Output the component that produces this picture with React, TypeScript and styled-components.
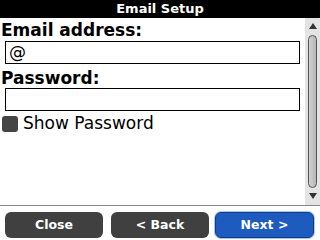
import React from 'react'
import styled, { createGlobalStyle } from 'styled-components'

const GlobalStyle = createGlobalStyle`
  html, body {
    margin: 0;
    padding: 0;
    background: #ffffff;
  }
  body {
    font-family: "DejaVu Sans", "Liberation Sans", sans-serif;
  }
`

const Screen = styled.div`
  width: 320px;
  height: 240px;
  display: flex;
  flex-direction: column;
  background: #ffffff;
  overflow: hidden;
`

const TitleBar = styled.div`
  height: 18px;
  flex: none;
  background: #000000;
  color: #ffffff;
  font-weight: bold;
  font-size: 13px;
  line-height: 18px;
  text-align: center;
`

const Body = styled.div`
  height: 187px;
  flex: none;
  display: flex;
`

const Content = styled.div`
  flex: 1;
  display: flex;
  flex-direction: column;
  padding: 3px 5px 0 1px;
`

const Label = styled.div<{ $gap: number }>`
  margin-top: ${(p) => p.$gap}px;
  font-weight: bold;
  font-size: 17px;
  line-height: 18px;
  color: #000000;
`

const Field = styled.div<{ $gap: number }>`
  height: 21px;
  margin: ${(p) => p.$gap}px 0 0 4px;
  border: 1px solid #000000;
  font-size: 17px;
  line-height: 21px;
  padding-left: 3px;
  color: #000000;
`

const CheckRow = styled.div`
  display: flex;
  align-items: center;
  gap: 5px;
  margin: 4px 0 0 1px;
  font-size: 17px;
  line-height: 17px;
  color: #000000;
`

const Box = styled.div`
  width: 16px;
  height: 16px;
  border-radius: 3px;
  background: #444444;
`

const ScrollBar = styled.div`
  width: 15px;
  background: #e4e4e4;
  display: flex;
  flex-direction: column;
  align-items: center;
  padding-top: 5px;
`

const Arrow = styled.div<{ $down?: boolean }>`
  width: 0;
  height: 0;
  border-left: 4px solid transparent;
  border-right: 4px solid transparent;
  ${(p) =>
    p.$down
      ? 'border-top: 6px solid #333333;'
      : 'border-bottom: 6px solid #333333;'}
`

const Thumb = styled.div`
  width: 7px;
  height: 151px;
  margin: 6px 0 5px;
  border: 1px solid #555555;
  border-radius: 5px;
  background: linear-gradient(to right, #d2d2d2, #b6b6b6);
`

const Footer = styled.div`
  flex: none;
  border-top: 1px solid #8a8a8a;
  height: 33px;
  display: flex;
  align-items: flex-start;
  gap: 8px;
  padding: 6px 5px 0;
`

const Button = styled.div<{ $primary?: boolean }>`
  width: ${(p) => (p.$primary ? 97 : 98)}px;
  height: ${(p) => (p.$primary ? 24 : 26)}px;
  border-radius: 6px;
  background: ${(p) => (p.$primary ? '#1e5bbf' : '#404040')};
  color: #ffffff;
  font-weight: bold;
  font-size: 12.5px;
  line-height: ${(p) => (p.$primary ? 24 : 26)}px;
  text-align: center;
  ${(p) =>
    p.$primary
      ? 'border: 1px solid #0d3c8a; box-shadow: 0 0 0 1px #a9c8ee; margin-left: -2px;'
      : ''}
`

export default function App() {
  return (
    <Screen>
      <GlobalStyle />
      <TitleBar>Email Setup</TitleBar>
      <Body>
        <Content>
          <Label $gap={0}>Email address:</Label>
          <Field $gap={2}>@</Field>
          <Label $gap={5}>Password:</Label>
          <Field $gap={1}></Field>
          <CheckRow>
            <Box />
            Show Password
          </CheckRow>
        </Content>
        <ScrollBar>
          <Arrow />
          <Thumb />
          <Arrow $down />
        </ScrollBar>
      </Body>
      <Footer>
        <Button>Close</Button>
        <Button>&lt; Back</Button>
        <Button $primary>Next &gt;</Button>
      </Footer>
    </Screen>
  )
}
